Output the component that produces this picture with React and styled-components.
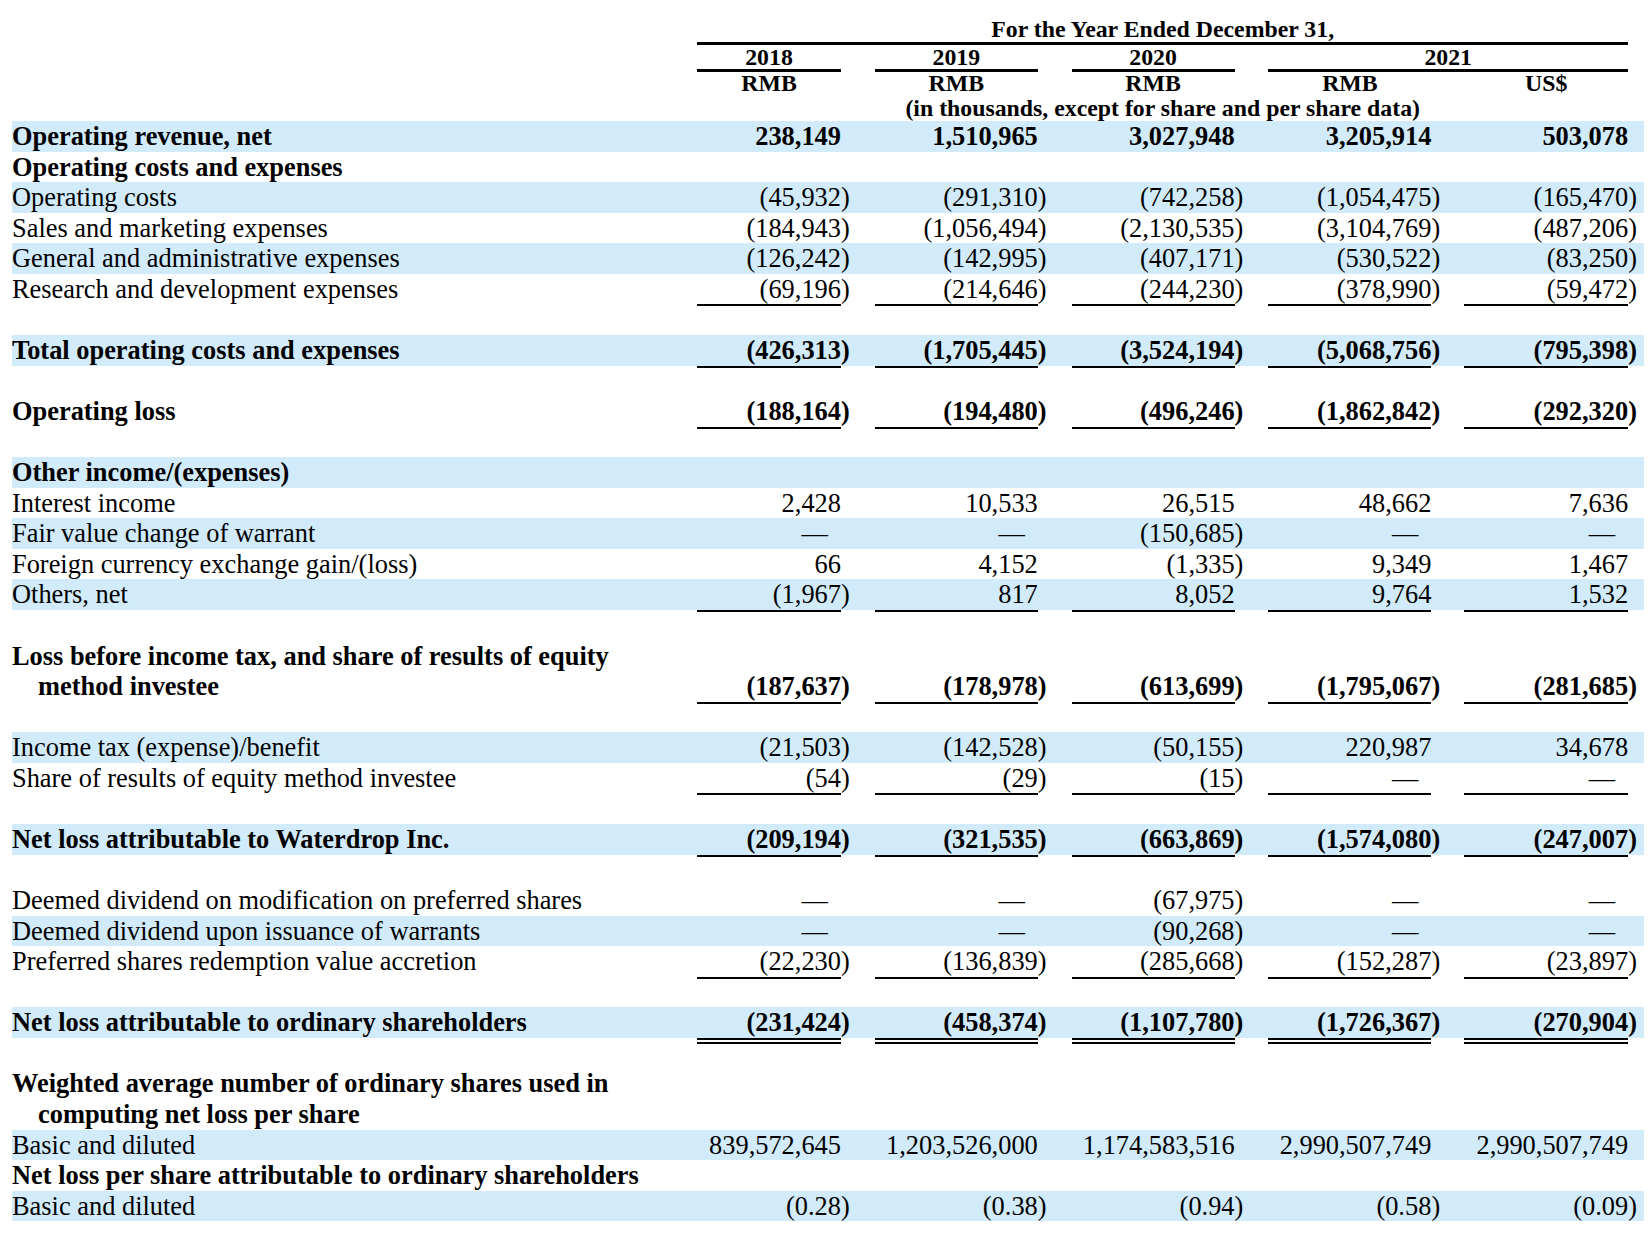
import React from 'react';
import styled, { createGlobalStyle } from 'styled-components';

const GlobalStyle = createGlobalStyle`
  html, body {
    margin: 0;
    padding: 0;
    background: #fff;
  }
  body {
    font-family: "Liberation Serif", "Times New Roman", serif;
    color: #000;
  }
`;

const BAND = '#d2ebfa';
const ROW_H = 30.57;
const COLS = '685px 144px repeat(4, 196.8px)';
const WIDTHS = [144, 163, 163, 163, 164];

const Sheet = styled.div`
  width: 1632px;
  padding: 16px 8px 40px 12px;
`;

const HeadRow = styled.div`
  display: grid;
  grid-template-columns: ${COLS};
  font-weight: bold;
  font-size: 23.8px;
  line-height: ${p => p.$lh}px;
`;

const HeadCell = styled.div`
  grid-column: ${p => p.$span || 'auto'};
  justify-self: end;
  width: ${p => p.$w}px;
  text-align: center;
  white-space: nowrap;
  border-bottom: ${p => (p.$ruled ? '3px solid #000' : 'none')};
`;

const Line = styled.div`
  display: grid;
  grid-template-columns: ${COLS};
  padding-right: 16px;
  min-height: ${ROW_H}px;
  line-height: ${ROW_H}px;
  font-size: 26.4px;
  background: ${p => (p.$band ? BAND : 'transparent')};
  font-weight: ${p => (p.$strong ? 'bold' : 'normal')};
`;

const Label = styled.div`
  grid-column: 1;
  padding-left: 26px;
  text-indent: -26px;
  white-space: nowrap;
`;

const RULES = {
  none: 'none',
  single: '0 2px 0 #000',
  double: '0 2px 0 #000, 0 4px 0 #fff, 0 6px 0 #000',
};

const Figure = styled.div`
  justify-self: end;
  align-self: end;
  width: ${p => p.$w}px;
  text-align: right;
  white-space: nowrap;
  box-shadow: ${p => RULES[p.$rule || 'none']};
`;

const Close = styled.span`
  margin-right: -0.333em;
`;

const Dash = styled.span`
  margin-right: 13px;
`;

const ROWS = [
  { label: ['Operating revenue, net'], strong: true, band: true, values: ['238,149', '1,510,965', '3,027,948', '3,205,914', '503,078'] },
  { label: ['Operating costs and expenses'], strong: true },
  { label: ['Operating costs'], band: true, values: ['(45,932)', '(291,310)', '(742,258)', '(1,054,475)', '(165,470)'] },
  { label: ['Sales and marketing expenses'], values: ['(184,943)', '(1,056,494)', '(2,130,535)', '(3,104,769)', '(487,206)'] },
  { label: ['General and administrative expenses'], band: true, values: ['(126,242)', '(142,995)', '(407,171)', '(530,522)', '(83,250)'] },
  { label: ['Research and development expenses'], rule: 'single', values: ['(69,196)', '(214,646)', '(244,230)', '(378,990)', '(59,472)'] },
  { spacer: true },
  { label: ['Total operating costs and expenses'], strong: true, band: true, rule: 'single', values: ['(426,313)', '(1,705,445)', '(3,524,194)', '(5,068,756)', '(795,398)'] },
  { spacer: true },
  { label: ['Operating loss'], strong: true, rule: 'single', values: ['(188,164)', '(194,480)', '(496,246)', '(1,862,842)', '(292,320)'] },
  { spacer: true },
  { label: ['Other income/(expenses)'], strong: true, band: true },
  { label: ['Interest income'], values: ['2,428', '10,533', '26,515', '48,662', '7,636'] },
  { label: ['Fair value change of warrant'], band: true, values: ['—', '—', '(150,685)', '—', '—'] },
  { label: ['Foreign currency exchange gain/(loss)'], values: ['66', '4,152', '(1,335)', '9,349', '1,467'] },
  { label: ['Others, net'], band: true, rule: 'single', values: ['(1,967)', '817', '8,052', '9,764', '1,532'] },
  { spacer: true },
  { label: ['Loss before income tax, and share of results of equity', 'method investee'], strong: true, rule: 'single', values: ['(187,637)', '(178,978)', '(613,699)', '(1,795,067)', '(281,685)'] },
  { spacer: true },
  { label: ['Income tax (expense)/benefit'], band: true, values: ['(21,503)', '(142,528)', '(50,155)', '220,987', '34,678'] },
  { label: ['Share of results of equity method investee'], rule: 'single', values: ['(54)', '(29)', '(15)', '—', '—'] },
  { spacer: true },
  { label: ['Net loss attributable to Waterdrop Inc.'], strong: true, band: true, rule: 'single', values: ['(209,194)', '(321,535)', '(663,869)', '(1,574,080)', '(247,007)'] },
  { spacer: true },
  { label: ['Deemed dividend on modification on preferred shares'], values: ['—', '—', '(67,975)', '—', '—'] },
  { label: ['Deemed dividend upon issuance of warrants'], band: true, values: ['—', '—', '(90,268)', '—', '—'] },
  { label: ['Preferred shares redemption value accretion'], rule: 'single', values: ['(22,230)', '(136,839)', '(285,668)', '(152,287)', '(23,897)'] },
  { spacer: true },
  { label: ['Net loss attributable to ordinary shareholders'], strong: true, band: true, rule: 'double', values: ['(231,424)', '(458,374)', '(1,107,780)', '(1,726,367)', '(270,904)'] },
  { spacer: true },
  { label: ['Weighted average number of ordinary shares used in', 'computing net loss per share'], strong: true },
  { label: ['Basic and diluted'], band: true, values: ['839,572,645', '1,203,526,000', '1,174,583,516', '2,990,507,749', '2,990,507,749'] },
  { label: ['Net loss per share attributable to ordinary shareholders'], strong: true },
  { label: ['Basic and diluted'], band: true, values: ['(0.28)', '(0.38)', '(0.94)', '(0.58)', '(0.09)'] },
];

function Value({ text }) {
  if (text === '—') return <Dash>—</Dash>;
  if (text.startsWith('(')) {
    return (
      <>
        {text.slice(0, -1)}
        <Close>)</Close>
      </>
    );
  }
  return text;
}

function Header() {
  return (
    <>
      <HeadRow $lh={26}>
        <HeadCell $span="2 / -1" $w={931} $ruled>For the Year Ended December 31,</HeadCell>
      </HeadRow>
      <HeadRow $lh={24}>
        <HeadCell $span="2" $w={144} $ruled>2018</HeadCell>
        <HeadCell $w={163} $ruled>2019</HeadCell>
        <HeadCell $w={163} $ruled>2020</HeadCell>
        <HeadCell $span="5 / 7" $w={360} $ruled>2021</HeadCell>
      </HeadRow>
      <HeadRow $lh={23}>
        <HeadCell $span="2" $w={144}>RMB</HeadCell>
        <HeadCell $w={163}>RMB</HeadCell>
        <HeadCell $w={163}>RMB</HeadCell>
        <HeadCell $w={163}>RMB</HeadCell>
        <HeadCell $w={164}>US$</HeadCell>
      </HeadRow>
      <HeadRow $lh={26}>
        <HeadCell $span="2 / -1" $w={931}>(in thousands, except for share and per share data)</HeadCell>
      </HeadRow>
    </>
  );
}

export default function App() {
  return (
    <>
      <GlobalStyle />
      <Sheet>
        <Header />
        {ROWS.map((row, i) =>
          row.spacer ? (
            <Line key={i} />
          ) : (
            <Line key={i} $band={row.band} $strong={row.strong}>
              <Label>
                {row.label.map((part, j) => (
                  <React.Fragment key={j}>
                    {j > 0 && <br />}
                    {part}
                  </React.Fragment>
                ))}
              </Label>
              {(row.values || []).map((v, j) => (
                <Figure key={j} $w={WIDTHS[j]} $rule={row.rule}>
                  <Value text={v} />
                </Figure>
              ))}
            </Line>
          )
        )}
      </Sheet>
    </>
  );
}
